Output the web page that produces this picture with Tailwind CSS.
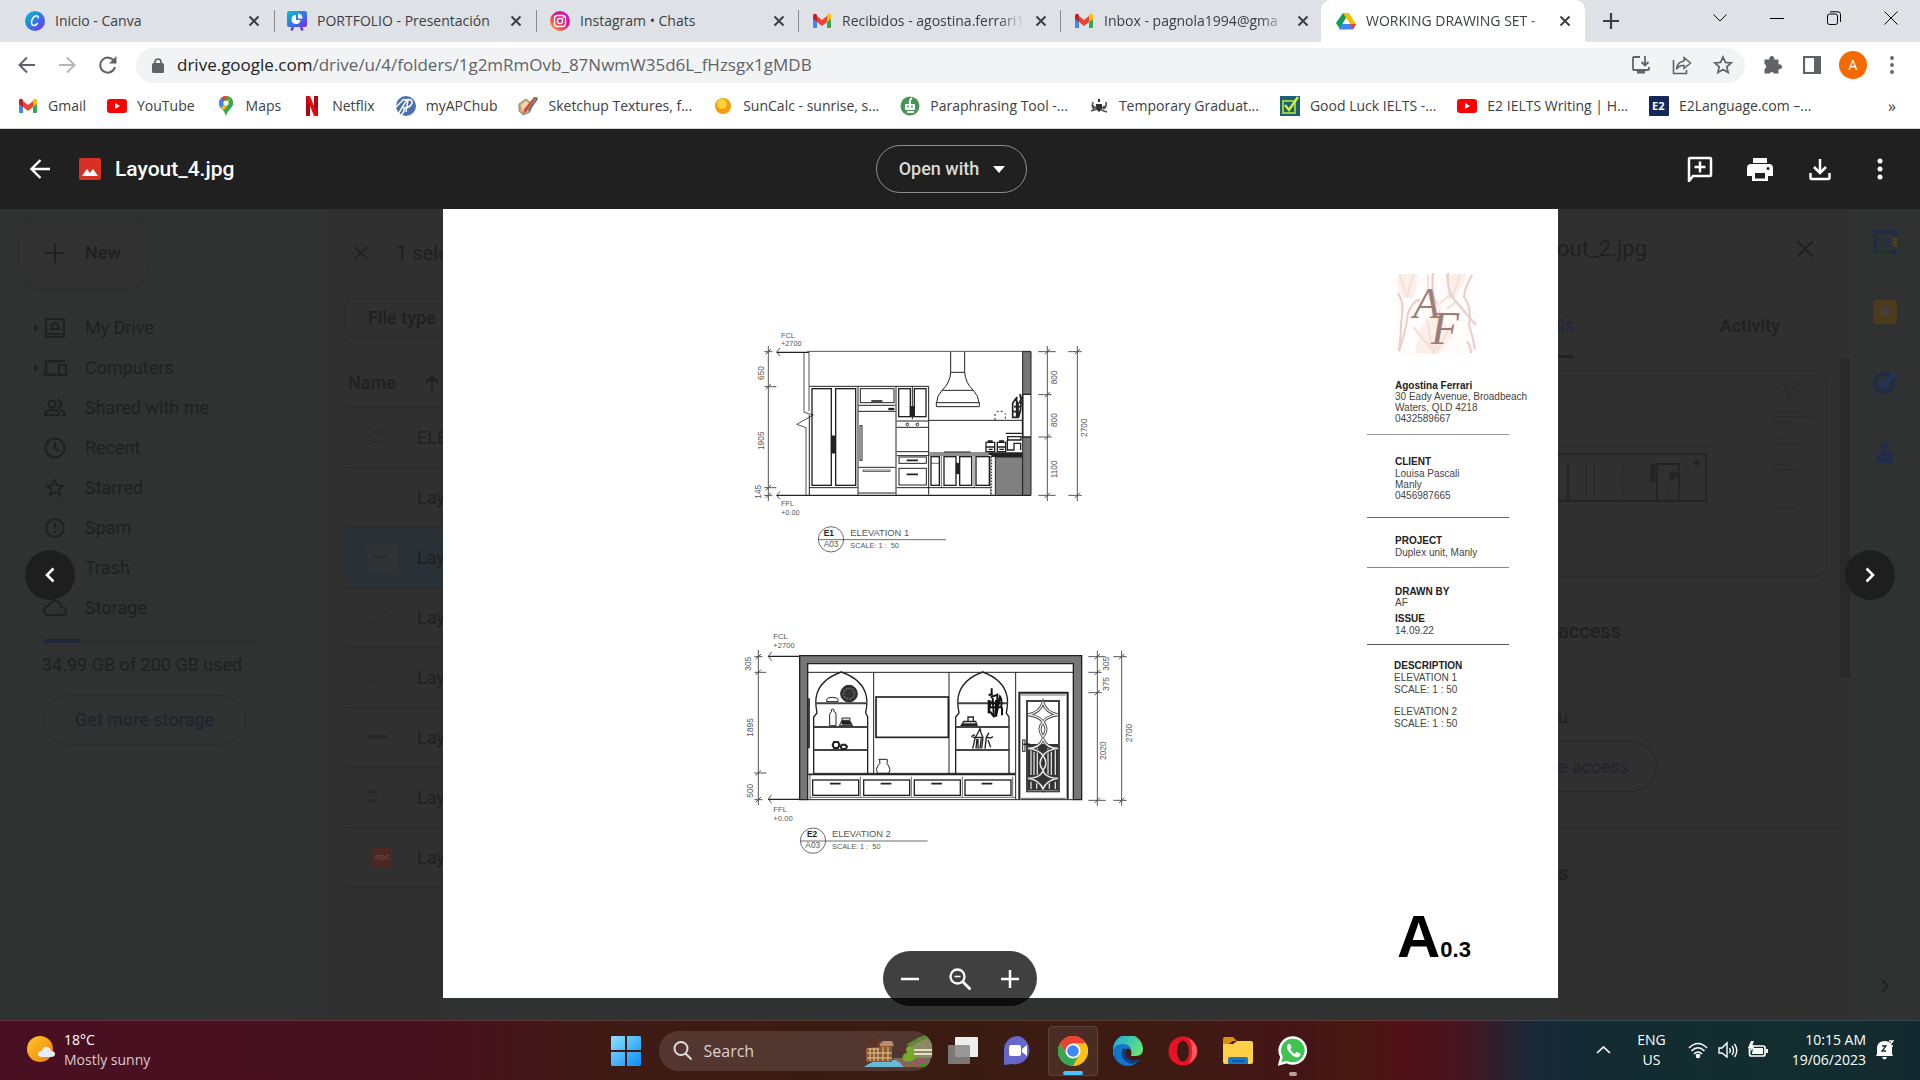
<!DOCTYPE html>
<html lang="en">
	<head>
		<meta charset="UTF-8" />
		<meta name="viewport" content="width=device-width, initial-scale=1.0" />
		<title>WORKING DRAWING SET</title>
		<script src="https://cdn.jsdelivr.net/npm/@tailwindcss/browser@4"></script>
	</head>
	<body class="flex h-screen flex-col overflow-hidden bg-[#303231] font-['Open_Sans',sans-serif] text-sm text-[#3c4043]">
		<!-- Shared icons -->
		<svg class="hidden">
			<symbol id="x" viewBox="0 0 12 12"><path d="M1.5 1.5l9 9M10.5 1.5l-9 9" stroke="currentColor" stroke-width="2" fill="none" /></symbol>
			<symbol id="thin-x" viewBox="0 0 16 16"><path d="M1 1l14 14M15 1L1 15" stroke="currentColor" stroke-width="1.8" fill="none" /></symbol>
			<symbol id="gmail" viewBox="0 0 20 16">
				<path d="M1 2v12q0 1 1 1h3V7z" fill="#4285f4" />
				<path d="M19 2v12q0 1-1 1h-3V7z" fill="#34a853" />
				<path d="M5 3v6l5 4 5-4V3l-5 4z" fill="#ea4335" />
				<path d="M1 3q0-3 3-2l1 1v7L1 6z" fill="#c5221f" />
				<path d="M19 3q0-3-3-2l-1 1v7l4-3z" fill="#fbbc04" />
			</symbol>
			<symbol id="youtube" viewBox="0 0 20 14"><rect width="20" height="14" rx="3" fill="#f00" /><path d="M8 4l5 3-5 3z" fill="#fff" /></symbol>
		</svg>

		<!-- Tab strip -->
		<nav class="flex h-[42px] shrink-0 bg-[#dee1e6] pl-3" aria-label="Tabs">
			<div class="flex w-[262px] items-center pl-[13px]">
				<svg class="h-5 w-5 shrink-0" viewBox="0 0 20 20">
					<defs><linearGradient id="canva" x1="0" y1="0" x2="1" y2="1"><stop stop-color="#00c4cc" /><stop offset=".5" stop-color="#2f7be8" /><stop offset="1" stop-color="#7d2ae8" /></linearGradient></defs>
					<circle cx="10" cy="10" r="10" fill="url(#canva)" />
					<path d="M13 7.5c.8-2-.8-3.5-2.7-2.5C7.5 6.3 6 10 6.700 12.8c.7 2.500 4 2.400 6-.8" stroke="#fff" stroke-width="1.5" fill="none" />
				</svg>
				<span class="ml-[10px] w-[193px] overflow-hidden whitespace-nowrap">Inicio - Canva</span>
				<button aria-label="Close tab"><svg class="h-3 w-3"><use href="#x" /></svg></button>
			</div>
			<div class="my-[10px] w-px bg-[#868b90]"></div>
			<div class="flex w-[261px] items-center pl-3">
				<svg class="h-5 w-5 shrink-0" viewBox="0 0 20 20">
					<rect width="20" height="16" rx="2" fill="url(#canva)" />
					<path d="M6 16l-1.500 3.500M14 16l1.500 3.500" stroke="#6b35e0" stroke-width="2.5" />
					<path d="M9 4a4.500 4.500 0 1 0 4.500 5H9z" fill="#fff" /><path d="M11 2.500v5h4.500a5 5 0 0 0-4.500-5z" fill="#fff" />
				</svg>
				<span class="ml-[10px] w-[193px] overflow-hidden whitespace-nowrap">PORTFOLIO - Presentación</span>
				<button aria-label="Close tab"><svg class="h-3 w-3"><use href="#x" /></svg></button>
			</div>
			<div class="my-[10px] w-px bg-[#868b90]"></div>
			<div class="flex w-[261px] items-center pl-[13px]">
				<svg class="h-5 w-5 shrink-0" viewBox="0 0 20 20">
					<defs><linearGradient id="insta" x1="0" y1="1" x2="1" y2="0"><stop stop-color="#fd5" /><stop offset=".3" stop-color="#ff543e" /><stop offset=".6" stop-color="#e1118e" /><stop offset="1" stop-color="#b42de0" /></linearGradient></defs>
					<circle cx="10" cy="10" r="10" fill="url(#insta)" />
					<rect x="4.5" y="4.5" width="11" height="11" rx="3" fill="none" stroke="#fff" stroke-width="1.4" />
					<circle cx="10" cy="10" r="2.6" fill="none" stroke="#fff" stroke-width="1.4" /><circle cx="13.2" cy="6.8" r=".8" fill="#fff" />
				</svg>
				<span class="ml-[10px] w-[193px] overflow-hidden whitespace-nowrap">Instagram • Chats</span>
				<button aria-label="Close tab"><svg class="h-3 w-3"><use href="#x" /></svg></button>
			</div>
			<div class="my-[10px] w-px bg-[#868b90]"></div>
			<div class="flex w-[261px] items-center pl-[13px]">
				<svg class="h-4 w-5 shrink-0"><use href="#gmail" /></svg>
				<span class="ml-[10px] mr-[10px] w-[183px] overflow-hidden whitespace-nowrap mask-r-from-85% mask-r-to-100%">Recibidos - agostina.ferrari1</span>
				<button aria-label="Close tab"><svg class="h-3 w-3"><use href="#x" /></svg></button>
			</div>
			<div class="my-[10px] w-px bg-[#868b90]"></div>
			<div class="flex w-[260px] items-center pl-[13px]">
				<svg class="h-4 w-5 shrink-0"><use href="#gmail" /></svg>
				<span class="ml-[10px] mr-[10px] w-[183px] overflow-hidden whitespace-nowrap mask-r-from-85% mask-r-to-100%">Inbox - pagnola1994@gma</span>
				<button aria-label="Close tab"><svg class="h-3 w-3"><use href="#x" /></svg></button>
			</div>
			<div class="flex w-[264px] items-center rounded-t-[10px] bg-white pl-[15px]">
				<svg class="h-5 w-5 shrink-0" viewBox="0 0 20 18">
					<path d="M7 1h6L7 11l-3 6-4-6z" fill="#0f9d58" /><path d="M7 1h6l7 11h-6z" fill="#fbbc04" /><path d="M6 12h14l-3 5.500H3z" fill="#4285f4" /><path d="M14 12h6l-3 5.500z" fill="#ea4335" /><path d="M10 6l3.500 6h-7z" fill="#fff" />
				</svg>
				<span class="ml-[10px] mr-[10px] w-[183px] overflow-hidden whitespace-nowrap mask-r-from-90% mask-r-to-100%">WORKING DRAWING SET -</span>
				<button aria-label="Close tab"><svg class="h-3 w-3"><use href="#x" /></svg></button>
			</div>
			<button class="ml-[18px]" aria-label="New tab"><svg class="h-4 w-4" viewBox="0 0 16 16"><path d="M8 0v16M0 8h16" stroke="#3c4043" stroke-width="2.2" /></svg></button>
			<div class="ml-auto flex h-9 pr-px text-black">
				<button class="flex w-[57px] items-center justify-center" aria-label="Search tabs"><svg class="h-2 w-[14px]" viewBox="0 0 14 8"><path d="M.5.5L7 7 13.500.5" fill="none" stroke="currentColor" /></svg></button>
				<button class="flex w-[57px] items-center justify-center" aria-label="Minimize"><svg class="h-2 w-[14px]" viewBox="0 0 14 8"><path d="M0 4.500h14" stroke="currentColor" /></svg></button>
				<button class="flex w-[57px] items-center justify-center" aria-label="Restore"><svg class="h-[14px] w-[14px]" viewBox="0 0 14 14"><rect x=".5" y="3" width="10" height="10.5" rx="2" fill="none" stroke="currentColor" /><path d="M3 .8h8q2.500 0 2.500 2.500V11" fill="none" stroke="currentColor" /></svg></button>
				<button class="flex w-[57px] items-center justify-center" aria-label="Close"><svg class="h-[14px] w-[14px]" viewBox="0 0 14 14"><path d="M.5.5l13 13M13.500.5l-13 13" stroke="currentColor" /></svg></button>
			</div>
		</nav>

		<!-- Address bar -->
		<div class="flex h-[46px] shrink-0 items-center bg-white text-[#5f6368]">
			<button class="ml-[18px]" aria-label="Back"><svg class="h-[18px] w-[18px]" viewBox="0 0 18 18"><path d="M17 9H2M9 1.500L1.500 9 9 16.500" fill="none" stroke="currentColor" stroke-width="2" /></svg></button>
			<button class="ml-[22px]" aria-label="Forward"><svg class="h-[18px] w-[18px]" viewBox="0 0 18 18"><path d="M1 9h15M9 1.500L16.500 9 9 16.500" fill="none" stroke="#b5b8bb" stroke-width="2" /></svg></button>
			<button class="ml-[23px]" aria-label="Reload"><svg class="h-[18px] w-[18px]" viewBox="0 0 18 18"><path d="M15 5A7.500 7.500 0 1 0 16 11" fill="none" stroke="currentColor" stroke-width="2" /><path d="M17.500 0v7.500H10z" fill="currentColor" /></svg></button>
			<div class="ml-[19px] flex h-[35px] flex-1 items-center rounded-full bg-[#f1f3f4] pl-4">
				<svg class="h-[15px] w-3" viewBox="0 0 12 15"><rect y="5" width="12" height="10" rx="1.5" fill="currentColor" /><path d="M3 6V4a3 3 0 0 1 6 0v2" fill="none" stroke="currentColor" stroke-width="1.7" /></svg>
				<a href="#" class="ml-[13px] text-[17px]"><span class="text-[#202124]">drive.google.com</span>/drive/u/4/folders/1g2mRmOvb_87NwmW35d6L_fHzsgx1gMDB</a>
				<div class="ml-auto flex gap-[21px] pr-3">
					<button aria-label="Install"><svg class="h-5 w-5" viewBox="0 0 20 20"><path d="M9 2H3q-1 0-1 1v11q0 1 1 1h14q1 0 1-1v-2" fill="none" stroke="currentColor" stroke-width="1.8" /><path d="M14 1v9M10.500 7l3.500 3.500L17.500 7" fill="none" stroke="currentColor" stroke-width="1.8" /><path d="M6 16h8v2.500H6z" fill="currentColor" /></svg></button>
					<button aria-label="Share"><svg class="h-5 w-5" viewBox="0 0 20 20"><path d="M1.500 5v13.500h13V15" fill="none" stroke="currentColor" stroke-width="1.6" /><path d="M12 2.500L18.500 8 12 13.500V10.500q-5-.5-7.500 4 .5-7.500 7.500-8.500z" fill="none" stroke="currentColor" stroke-width="1.5" /></svg></button>
					<button aria-label="Bookmark"><svg class="h-5 w-5" viewBox="0 0 20 20"><path d="M10 2l2.400 5.400 5.800.6-4.400 3.800 1.300 5.700L10 14.500l-5.100 3 1.300-5.700L1.800 8l5.800-.6z" fill="none" stroke="currentColor" stroke-width="1.7" /></svg></button>
				</div>
			</div>
			<div class="flex items-center pl-[18px] pr-[26px]">
				<button aria-label="Extensions"><svg class="h-5 w-5" viewBox="0 0 20 20"><path d="M1.500 4.500h5a2.500 2.500 0 1 1 4.600 0h4.400v5a2.500 2.500 0 1 1 0 4.500v4.500h-4.400a2.500 2.500 0 0 0-4.600 0h-5V14a2.500 2.500 0 0 0 0-4.800z" fill="currentColor" /></svg></button>
				<button class="ml-5" aria-label="Side panel"><svg class="h-[18px] w-[18px]" viewBox="0 0 18 18"><rect x="1" y="1" width="16" height="16" fill="none" stroke="currentColor" stroke-width="2.2" /><path d="M11 1h6v16h-6z" fill="currentColor" /></svg></button>
				<button class="ml-[18px] h-7 w-7 rounded-full bg-[#f56a00] text-sm text-white">A</button>
				<button class="ml-[23px]" aria-label="Menu"><svg class="h-[18px] w-1" viewBox="0 0 4 18"><g fill="currentColor"><circle cx="2" cy="2" r="1.9" /><circle cx="2" cy="9" r="1.9" /><circle cx="2" cy="16" r="1.9" /></g></svg></button>
			</div>
		</div>

		<!-- Bookmarks -->
		<nav class="flex h-[41px] shrink-0 items-center gap-[21px] border-b border-[#d5d7da] bg-white pb-[5px] pl-[18px] pr-6 whitespace-nowrap" aria-label="Bookmarks">
			<a href="#" class="flex items-center gap-[10px]"><svg class="h-4 w-5"><use href="#gmail" /></svg>Gmail</a>
			<a href="#" class="flex items-center gap-[10px]"><svg class="h-[14px] w-5"><use href="#youtube" /></svg>YouTube</a>
			<a href="#" class="flex items-center gap-[10px]"><svg class="h-5 w-5" viewBox="0 0 20 20"><path d="M10 0a7 7 0 0 0-7 7c0 5 5 6 7 13 2-7 7-8 7-13a7 7 0 0 0-7-7z" fill="#34a853" /><path d="M3 7a7 7 0 0 1 2-5l5 5-5 6q-2-3-2-6z" fill="#4285f4" /><path d="M5 2a7 7 0 0 1 7-1.700L7.500 5z" fill="#ea4335" /><path d="M12 .3Q17 2 17 7q0 3-3 6l-4-2z" fill="#34a853" /><path d="M5 12l9-10q-3 9-6 12-2 0-3-2z" fill="#fbbc04" /><circle cx="10" cy="7" r="2.6" fill="#fff" /></svg>Maps</a>
			<a href="#" class="flex items-center gap-[10px]"><svg class="h-5 w-5" viewBox="0 0 20 20"><path d="M4 0h4v20H4zM12 0h4v20h-4z" fill="#b1060f" /><path d="M4 0h4l8 20h-4z" fill="#e50914" /></svg>Netflix</a>
			<a href="#" class="flex items-center gap-[10px]"><svg class="h-5 w-5" viewBox="0 0 20 20"><circle cx="10" cy="10" r="10" fill="#4a6fb3" /><path d="M2 18C6 13 8 6 12 4l-2 12M8 4q9-2 8 3-1 4-7 5M0 11q6-6 8-8M5 19q4-3 3-8" fill="none" stroke="#fff" stroke-width="1.5" /></svg>myAPChub</a>
			<a href="#" class="flex items-center gap-[10px]"><svg class="h-5 w-5" viewBox="0 0 20 20"><path d="M1 8l7-5 6 5-2 8-7 3-4-4z" fill="#d9a56c" stroke="#7d8da0" /><path d="M3 9l5-4 4 4-2 6-5 1z" fill="#f0d9b8" /><path d="M19 1L9 15l-4 3 1-5L16 1z" fill="#c8553e" /><path d="M19 1l-9 13 1 2L20 3z" fill="#6a6f78" /></svg>Sketchup Textures, f...</a>
			<a href="#" class="flex items-center gap-[10px]"><svg class="h-5 w-5" viewBox="0 0 20 20"><circle cx="10" cy="10" r="8" fill="#f59b0c" /><circle cx="9" cy="8" r="5" fill="#ffd23c" /></svg>SunCalc - sunrise, s...</a>
			<a href="#" class="flex items-center gap-[10px]"><svg class="h-5 w-5" viewBox="0 0 20 20"><circle cx="10" cy="10" r="9.5" fill="#499557" /><rect x="5" y="8" width="10" height="6" rx="1" fill="#fff" /><path d="M7 16h7M10 8q-1-4 2-6" stroke="#fff" stroke-width="2" fill="none" /><circle cx="8" cy="10.5" r="1" fill="#499557" /><circle cx="12" cy="10.5" r="1" fill="#499557" /></svg>Paraphrasing Tool -...</a>
			<a href="#" class="flex items-center gap-[10px]"><svg class="h-5 w-5" viewBox="0 0 20 20"><path d="M7 8h6v5l-3 3-3-3zM9 3h2v3H9z" fill="#333" /><path d="M6 14q-4-2-2-8M14 13q4-1 3-7M2 15l6-2M18 16l-6-2M4 10l3 2M16 10l-3 2" stroke="#555" stroke-width="1.7" fill="none" /></svg>Temporary Graduat...</a>
			<a href="#" class="flex items-center gap-[10px]"><svg class="h-5 w-5" viewBox="0 0 20 20"><rect width="20" height="20" fill="#1f5f74" /><rect x="3" y="5" width="12" height="12" fill="none" stroke="#8ed13f" stroke-width="2" /><path d="M5 9l4 5L18 1" fill="none" stroke="#d7ec3b" stroke-width="2.5" /></svg>Good Luck IELTS -...</a>
			<a href="#" class="flex items-center gap-[10px]"><svg class="h-[14px] w-5"><use href="#youtube" /></svg>E2 IELTS Writing | H...</a>
			<a href="#" class="flex items-center gap-[10px]"><svg class="h-5 w-5" viewBox="0 0 20 20"><rect width="20" height="20" rx="1" fill="#14285a" /><text x="3" y="14" font-size="11" font-weight="700" fill="#fff">E2</text></svg>E2Language.com –...</a>
			<button class="ml-auto text-base" aria-label="More bookmarks">»</button>
		</nav>

		<!-- Viewer header -->
		<header class="grid h-20 shrink-0 grid-cols-3 items-center bg-[#202020] pr-4 font-[Roboto,sans-serif] text-white">
			<div class="flex items-center pl-[30px]">
				<button aria-label="Back"><svg class="h-5 w-5" viewBox="0 0 20 20"><path d="M20 10H2M10.500 1L1.500 10l9 9" fill="none" stroke="currentColor" stroke-width="2.4" /></svg></button>
				<svg class="ml-[29px] h-[22px] w-[22px]" viewBox="0 0 22 22"><rect width="22" height="22" rx="2" fill="#d93025" /><path d="M3 18l5-7 3 4 3-4 5 7z" fill="#fff" /></svg>
				<h1 class="ml-[14px] text-[21px] font-medium">Layout_4.jpg</h1>
			</div>
			<button class="flex h-12 w-[151px] items-center justify-center gap-[14px] justify-self-center rounded-full border border-[#8e8e8e] text-lg font-medium text-[#dadada]">
				Open with
				<svg class="h-[7px] w-3" viewBox="0 0 12 7"><path d="M0 0h12L6 7z" fill="#fff" /></svg>
			</button>
			<div class="flex items-center gap-[34px] justify-self-end pr-[11px]">
				<button aria-label="Add comment"><svg class="h-[26px] w-[26px]" viewBox="0 0 26 26"><path d="M2 25V3q0-1 1-1h20q1 0 1 1v16q0 1-1 1H6z" fill="none" stroke="currentColor" stroke-width="2.5" /><path d="M13 5.500v11M7.500 11h11" stroke="currentColor" stroke-width="2.5" /></svg></button>
				<button aria-label="Print"><svg class="h-[26px] w-[26px]" viewBox="0 0 26 26"><path d="M6 2h14v5H6zM4 8h18q4 0 4 4v8h-5v5H5v-5H0v-8q0-4 4-4z" fill="currentColor" /><path d="M8 17h10v5.500H8z" fill="#202020" /><circle cx="21" cy="12.5" r="1.5" fill="#202020" /></svg></button>
				<button aria-label="Download"><svg class="h-[26px] w-[26px]" viewBox="0 0 26 26"><path d="M13 3v13M7 11l6 6 6-6M3.500 17v5q0 1 1 1h17q1 0 1-1v-5" fill="none" stroke="currentColor" stroke-width="2.5" /></svg></button>
				<button aria-label="More actions"><svg class="h-[26px] w-[26px]" viewBox="0 0 26 26"><g fill="currentColor"><circle cx="13" cy="5" r="2.5" /><circle cx="13" cy="13" r="2.5" /><circle cx="13" cy="21" r="2.5" /></g></svg></button>
			</div>
		</header>

		<!-- Viewer stage -->
		<main class="relative flex min-h-0 flex-1 font-[Roboto,sans-serif] text-lg text-[#1f2020]">
			<!-- Dimmed sidebar -->
			<aside class="w-[325px] shrink-0 bg-[#303231]">
				<button class="mt-2 ml-5 flex h-[71px] w-[127px] items-center rounded-[20px] bg-[#313131] pl-[25px] shadow-sm">
					<svg class="h-5 w-5" viewBox="0 0 20 20"><path d="M10 0v20M0 10h20" stroke="currentColor" stroke-width="2" /></svg>
					<span class="ml-5 font-medium">New</span>
				</button>
				<nav class="mt-5 flex flex-col">
					<a href="#" class="flex h-10 items-center pl-[33px]"><svg class="h-2 w-[10px]" viewBox="0 0 10 8"><path d="M1 0l4 4-4 4z" fill="currentColor" /></svg><svg class="mr-[18px] h-6 w-6" viewBox="0 0 24 24" fill="none" stroke="currentColor" stroke-width="2"><rect x="3" y="3" width="18" height="18" /><path d="M3 18h18" /><path d="M12 7q-3 0-4 6h8q-1-6-4-6z" /></svg>My Drive</a>
					<a href="#" class="flex h-10 items-center pl-[33px]"><svg class="h-2 w-[10px]" viewBox="0 0 10 8"><path d="M1 0l4 4-4 4z" fill="currentColor" /></svg><svg class="mr-[18px] h-6 w-6" viewBox="0 0 24 24" fill="none" stroke="currentColor" stroke-width="2"><path d="M22 5H3v14M0 19h14" stroke-width="2.5" /><rect x="16" y="9" width="7" height="10" /></svg>Computers</a>
					<a href="#" class="flex h-10 items-center pl-[43px]"><svg class="mr-[18px] h-6 w-6" viewBox="0 0 24 24" fill="none" stroke="currentColor" stroke-width="2"><circle cx="9" cy="8" r="3.5" /><path d="M2 19v-2q2-3 7-3t7 3v2zM14 4q4 0 4 4t-4 4M17 14q5 1 5 5h-3" /></svg>Shared with me</a>
					<a href="#" class="flex h-10 items-center pl-[43px]"><svg class="mr-[18px] h-6 w-6" viewBox="0 0 24 24" fill="none" stroke="currentColor" stroke-width="2"><circle cx="12" cy="12" r="9.5" /><path d="M12 6v6l4 3" /></svg>Recent</a>
					<a href="#" class="flex h-10 items-center pl-[43px]"><svg class="mr-[18px] h-6 w-6" viewBox="0 0 24 24" fill="none" stroke="currentColor" stroke-width="1.8"><path d="M12 4l2.300 5.300 5.700.5-4.300 3.800 1.300 5.600-5-3-5 3 1.300-5.600L4 9.800l5.700-.5z" /></svg>Starred</a>
					<a href="#" class="flex h-10 items-center pl-[43px]"><svg class="mr-[18px] h-6 w-6" viewBox="0 0 24 24" fill="none" stroke="currentColor" stroke-width="2"><path d="M8.500 3.500h7l5 5v7l-5 5h-7l-5-5v-7zM12 7v6M12 15v2" /></svg>Spam</a>
					<a href="#" class="flex h-10 items-center pl-[85px]">Trash</a>
					<a href="#" class="flex h-10 items-center pl-[43px]"><svg class="mr-[18px] h-6 w-6" viewBox="0 0 24 24" fill="none" stroke="currentColor" stroke-width="2"><path d="M6 19q-5 0-5-4.500t5-5Q8 5 12 5q5 0 6 6 5 0 5 4t-4 4z" /></svg>Storage</a>
				</nav>
				<div class="mt-[11px] ml-[43px] h-1 w-[216px] rounded-full bg-[#2d2f2e]"><div class="h-1 w-[37px] rounded-full bg-[#1f2738]"></div></div>
				<p class="mt-2 ml-[42px]">34.99 GB of 200 GB used</p>
				<button class="mt-4 ml-[43px] h-[50px] w-[203px] rounded-full border border-[#292b2a] font-medium text-[#20242e]">Get more storage</button>
			</aside>

			<!-- Dimmed file list -->
			<section class="w-[118px] shrink-0 overflow-hidden bg-[#303030] pl-5 whitespace-nowrap">
				<div class="flex h-[89px] items-center pb-[2px] text-xl"><svg class="ml-[9px] mr-7 h-[14px] w-[14px] shrink-0"><use href="#thin-x" /></svg>1 sele</div>
				<button class="h-10 w-[130px] rounded-lg border border-[#282828] pl-[22px] text-left font-medium">File type</button>
				<div class="flex h-[70px] items-center border-b border-[#292929] pt-5 pl-[3px] font-medium">Name<svg class="ml-7 h-4 w-4" viewBox="0 0 16 16"><path d="M8 16V2M2 8l6-6 6 6" fill="none" stroke="currentColor" stroke-width="2" /></svg></div>
				<div class="flex h-[60px] items-center border-b border-[#292929] pl-[22px]"><svg class="mr-5 h-[30px] w-[30px] shrink-0" viewBox="0 0 30 30" stroke="#282828" stroke-width="2"><path d="M4 9h11M4 19h9" /></svg>ELE</div>
				<div class="flex h-[60px] items-center border-b border-[#292929] pl-[72px]">Lay</div>
				<div class="flex h-[60px] items-center border-b border-[#292929] bg-[#293036] pl-[22px]"><svg class="mr-5 h-[30px] w-[30px] shrink-0" viewBox="0 0 30 30"><rect width="30" height="30" rx="2" fill="#303234" /><path d="M4 14h17" stroke="#2a2c2e" stroke-width="3" /></svg>Lay</div>
				<div class="flex h-[60px] items-center border-b border-[#292929] pl-[22px]"><svg class="mr-5 h-[30px] w-[30px] shrink-0" viewBox="0 0 30 30" stroke="#2b2b2b"><path d="M0 9h20M0 20h16M28 4v20" /></svg>Lay</div>
				<div class="flex h-[60px] items-center border-b border-[#292929] pl-[22px]"><svg class="mr-5 h-[30px] w-[30px] shrink-0" viewBox="0 0 30 30" stroke="#2a2a2a" stroke-width="2"><path d="M3 9h8M2 18h2M6 19h7" /></svg>Lay</div>
				<div class="flex h-[60px] items-center border-b border-[#292929] pl-[22px]"><svg class="mr-5 h-[30px] w-[30px] shrink-0" viewBox="0 0 30 30"><path d="M0 14h20" stroke="#272727" stroke-width="4" /></svg>Lay</div>
				<div class="flex h-[60px] items-center border-b border-[#292929] pl-[22px]"><svg class="mr-5 h-[30px] w-[30px] shrink-0" viewBox="0 0 30 30" stroke="#282828" stroke-width="3"><path d="M0 9h10M2 18h8" /></svg>Lay</div>
				<div class="flex h-[60px] items-center border-b border-[#292929] pl-[27px]"><span class="mr-[25px] h-5 w-5 shrink-0 rounded-xs bg-[#4b2725] text-center text-[8px] leading-5 font-bold text-[#6a4543]">PDF</span>Lay</div>
			</section>

			<!-- Drawing sheet -->
			<article class="mb-[22px] flex min-w-0 flex-1 bg-white font-['Liberation_Sans',sans-serif] text-[#222]">
				<div class="flex flex-1 flex-col gap-[60px] pt-[111px] pl-[287px]">
					<!-- Kitchen elevation -->
					<svg class="h-[240px] w-[380px]" viewBox="0 0 1140 720" fill="none" stroke="#222" stroke-width="3">
						<g stroke="#555">
							<path d="M115 78v465M952 78v465M1042 78v465" />
							<path d="M103 95h24M103 200h36M103 503h36M103 526h24M925 95h52M925 224h40M925 351h40M925 526h52M1015 95h40M1015 526h40" />
							<path d="M107 103l16-16M107 208l16-16M107 511l16-16M107 534l16-16M944 103l16-16M944 232l16-16M944 359l16-16M944 534l16-16M1034 103l16-16M1034 534l16-16" />
							<path d="M150 84l-10 12 10 12M150 514l-10 12 10 12" />
							<path d="M232 94h670M222 97v180l28 8-50 28 28 10v203M237 97v177" />
						</g>
						<path d="M140 97h97M140 526h763" stroke-width="4" />
						<!-- Tall units and fridge -->
						<path d="M238 285v241M238 199h358v105M238 503h145M384 199v327M498 199v327" />
						<g stroke-width="4"><rect x="246" y="206" width="58" height="290" /><rect x="317" y="206" width="60" height="290" /></g>
						<path d="M304 348h12v51h-12z" fill="#222" />
						<rect x="391" y="206" width="101" height="42" /><path d="M424 243h33" stroke-width="5" />
						<path d="M385 256h111M385 274h111M385 442h111M385 519h111" /><path d="M475 267h18" stroke-width="7" /><rect x="390" y="317" width="6" height="104" /><rect x="399" y="450" width="81" height="4" stroke-width="2" />
						<!-- Oven column -->
						<g stroke-width="4"><rect x="506" y="206" width="35" height="84" /><rect x="553" y="206" width="35" height="84" /></g>
						<path d="M541 260h12v30h-12z" fill="#222" />
						<path d="M547 200v98M500 303h96M500 322h96M500 395h96M596 304v220M500 407h96M500 503h282" /><circle cx="532" cy="313" r="4" /><circle cx="562" cy="313" r="4" />
						<rect x="507" y="411" width="82" height="19" /><rect x="507" y="445" width="82" height="50" /><path d="M530 421h34M530 463h34" stroke-width="5" />
						<!-- Range hood -->
						<path d="M662 95v62h42V95M662 157q-2 32-26 54-16 17-16 37M704 157q2 32 26 54 16 17 17 37M636 211h94M619 248h129v12H619z" />
						<!-- Shelf and bench -->
						<path d="M596 301h280M598 399h178M598 405h178M642 396h80" /><path d="M795 300v-20M800 274h18M826 296v-16" stroke-dasharray="6 6" />
						<g stroke-width="4"><rect x="603" y="410" width="25" height="86" /><rect x="642" y="410" width="36" height="86" /><rect x="689" y="410" width="36" height="86" /><rect x="738" y="410" width="40" height="86" /></g>
						<path d="M603 430h25M634 407v96M732 407v96M782 407v118" stroke-width="2" /><path d="M679 430h9v31h-9z" fill="#222" />
						<path d="M768 367h26v28h-26zM802 367h25v28h-25zM773 363h15M807 363h15" stroke-width="4" /><path d="M768 381h26M802 381h25M776 388h12M808 388h14" stroke-width="4" />
						<path d="M827 340h48M833 350h40v10h-40zM832 360v30h20v-20h20v20" stroke-width="4" />
						<path d="M848 292v-42l8-12 8 12v42zM866 292q12-35 4-70M852 260h18M850 275h22M860 230v60M868 250l8-20" stroke-width="5" />
						<path d="M776 401h100M784 407h94" stroke-width="8" /><path d="M785 410v115" stroke-dasharray="4 5" />
						<path d="M796 411h82v115h-82z" fill="#808080" /><path d="M878 95h25v128h-25zM878 351h25v175h-25z" fill="#777" /><path d="M878 223h25v128h-25z" /><path d="M878 223v128" stroke-width="5" />
						<!-- Labels -->
						<g fill="#555" stroke="none" font-size="22">
							<text x="153" y="54">FCL</text><text x="153" y="77">+2700</text><text x="153" y="559">FFL</text><text x="153" y="584">+0.00</text>
							<text transform="rotate(-90 101 180)" x="101" y="180" font-size="25">650</text>
							<text transform="rotate(-90 101 390)" x="101" y="390" font-size="25">1905</text>
							<text transform="rotate(-90 94 536)" x="94" y="536" font-size="25">145</text>
							<text transform="rotate(-90 980 193)" x="980" y="193" font-size="25">800</text>
							<text transform="rotate(-90 980 321)" x="980" y="321" font-size="25">800</text>
							<text transform="rotate(-90 980 475)" x="980" y="475" font-size="25">1100</text>
							<text transform="rotate(-90 1072 351)" x="1072" y="351" font-size="25">2700</text>
							<text x="361" y="647" font-size="28">ELEVATION 1</text><text x="361" y="683" font-size="22">SCALE: 1 :&#160; 50</text>
							<text x="281" y="647" font-size="25" font-weight="700" fill="#222">E1</text><text x="281" y="681" font-size="25">A03</text>
						</g>
						<circle cx="303" cy="658" r="38" stroke-width="2" /><path d="M265 659h383" stroke-width="2" />
					</svg>
					<!-- Living room elevation -->
					<svg class="h-[240px] w-[420px]" viewBox="0 0 1260 720" fill="none" stroke="#222" stroke-width="3">
						<g stroke="#555">
							<path d="M85 90v465M1102 92v465M1175 92v465" />
							<path d="M73 110h24M73 157h36M73 459h36M73 539h24M1075 110h52M1075 157h40M1075 218h40M1075 541h52M1150 110h40M1150 541h40" />
							<path d="M77 118l16-16M77 165l16-16M77 467l16-16M77 547l16-16M1094 118l16-16M1094 165l16-16M1094 226l16-16M1094 549l16-16M1167 118l16-16M1167 549l16-16" />
							<path d="M125 96l-10 13 10 13M125 524l-10 13 10 13" />
						</g>
						<path d="M115 109h95M115 538h95" stroke-width="4" />
						<path d="M209 107h846v432h-25V131H233v408h-24z" fill="#777" stroke-width="4" />
						<path d="M233 157h797M431 157v303M657 157v303M857 157v380M250 460h607M233 539h797" />
						<path d="M237 235v150" stroke-width="5" />
						<rect x="438" y="231" width="217" height="121" stroke-width="5" />
						<!-- Arched niches -->
						<path d="M251 460V291l10-12q-6-30-2-50 10-50 75-73 65 23 75 73 4 20-2 50l6 12v169M677 460V291l10-12q-6-30-2-50 10-50 73-73 63 23 73 73 4 20-2 50l8 12v169" stroke-width="4" />
						<path d="M258 250h150M251 321h161M251 390h161M683 250h150M677 321h161M677 390h161" stroke="#444" stroke-width="6" />
						<circle cx="357" cy="221" r="25" fill="#333" /><circle cx="357" cy="221" r="16" stroke="#999" stroke-width="3" stroke-dasharray="5 4" />
						<path d="M290 245v-7q3-6 17-6t17 6v7zM299 317v-34q2-8 6-8-3-8 3-8t4 8q5 0 6 8v34zM328 317h40l-10-16h-22zM336 301v-7h24v7" /><path d="M333 305h28M335 311h30M312 366h12l4 8-4 10h-12l-4-9zM336 374h10l5 6-4 7h-12l-3-7z" stroke-width="6" />
						<path d="M694 316h47l-4-12h-36zM700 305h38M714 303v-12h16v12" stroke-width="4" /><path d="M696 313h44" stroke-width="6" />
						<path d="M785 205v22M776 226l12-6M782 232l20-8v46l8-40q6 8 4 30M776 240v40l6-38M788 234l4 58M798 240v50l6-30M776 262h40M780 250h30M790 288l-10-14M816 262v24" stroke="#111" stroke-width="6" />
						<path d="M728 386l8-34 6-10 8-16 3 12 6 15-4 32M744 386v-30M765 386l4-34 8-14M769 352l12 2 8-4M774 360l8 22M728 352h28M724 350l10-6M738 386l3-30M750 386l4-34" stroke-width="4" />
						<path d="M445 418h28M449 420q4 12-6 18-8 10 0 22h33q8-12 0-22-8-6-4-18" />
						<!-- Drawers -->
						<path d="M235 463h620" stroke-width="5" /><path d="M240 465v72M240 532h615M391 470v60M544 470v60M697 470v60M848 470v60" stroke-width="2" />
						<g stroke-width="4"><rect x="248" y="480" width="138" height="46" /><rect x="401" y="480" width="138" height="46" /><rect x="553" y="480" width="138" height="46" /><rect x="705" y="480" width="138" height="46" /></g>
						<path d="M300 491h32M452 491h32M604 491h32M755 491h32" stroke-width="5" />
						<!-- Door -->
						<path d="M868 537V218h145v319" stroke-width="6" /><path d="M873 225h134M873 535h134" stroke-width="2" /><rect x="891" y="243" width="96" height="271" stroke="#444" stroke-width="6" />
						<path d="M894 372h90v138h-90z" fill="#333" stroke="none" />
						<path d="M903 385v80M912 395v70M922 385v80M954 385v80M964 395v70M976 385v80M903 485v22M976 485v22M920 490v16M958 490v16" stroke="#ddd" stroke-width="4" />
						<g stroke="#444" stroke-width="9"><path d="M894 284q35-5 45-36 10 31 45 36-35 5-45 22-10-17-45-22zM939 306q-18 22 0 44 18-22 0-44M894 385q35 0 45-28 10 28 45 28-35 5-45 22-10-17-45-22M939 407q-18 22 0 44 18-22 0-44M894 475q35 0 45-22 10 22 45 22-35 5-45 32-10-27-45-32" /></g>
						<g stroke="#eee" stroke-width="4"><path d="M894 284q35-5 45-36 10 31 45 36-35 5-45 22-10-17-45-22zM939 306q-18 22 0 44 18-22 0-44M894 385q35 0 45-28 10 28 45 28-35 5-45 22-10-17-45-22M939 407q-18 22 0 44 18-22 0-44M894 475q35 0 45-22 10 22 45 22-35 5-45 32-10-27-45-32" /></g>
						<rect x="878" y="360" width="7" height="34" /><path d="M880 373h20" stroke-width="5" />
						<!-- Labels -->
						<g fill="#555" stroke="none" font-size="23">
							<text x="130" y="57">FCL</text><text x="130" y="85">+2700</text><text x="130" y="576">FFL</text><text x="130" y="602">+0.00</text>
							<text transform="rotate(-90 64 152)" x="64" y="152" font-size="25">305</text>
							<text transform="rotate(-90 70 350)" x="70" y="350" font-size="25">1895</text>
							<text transform="rotate(-90 70 533)" x="70" y="533" font-size="25">500</text>
							<text transform="rotate(-90 1137 152)" x="1137" y="152" font-size="25">305</text>
							<text transform="rotate(-90 1137 213)" x="1137" y="213" font-size="25">375</text>
							<text transform="rotate(-90 1128 420)" x="1128" y="420" font-size="25">2020</text>
							<text transform="rotate(-90 1205 367)" x="1205" y="367" font-size="25">2700</text>
							<text x="306" y="652" font-size="28">ELEVATION 2</text><text x="306" y="686" font-size="22">SCALE: 1 :&#160; 50</text>
							<text x="231" y="652" font-size="25" font-weight="700" fill="#222">E2</text><text x="226" y="684" font-size="25">A03</text>
						</g>
						<circle cx="249" cy="662" r="38" stroke-width="2" /><path d="M211 663h382" stroke-width="2" />
					</svg>
				</div>

				<!-- Title block -->
				<div class="w-[191px] shrink-0 pt-16 text-[10px] leading-[11px] text-[#444]">
					<svg class="ml-7 h-[82px] w-[82px]" viewBox="0 0 82 82" fill="none">
						<rect width="82" height="82" rx="5" fill="#fffcfb" />
						<path d="M8 25q-8-15-4-24h18q0 16-4 24zM50 1h21q-3 14-13 25zM20 80l6-26 12-12 6-18 5 25 9 15-15 17z" fill="#fbefe9" />
						<path d="M12 24L5 2M12 24L18 2M55 26L52 2M57 26L65 2M40 80L18 54M38 80l-6-34M40 78l4-40M42 78l13-24M33 22v-20M45 30l10-8M52 36l10-8" stroke="#f5dfd7" stroke-width="2" />
						<path d="M3 20q7 10 3 30 0 12-2 28Q11 58 13 40q6-14 12-13M38 0q-2 20 4 32M53 0q-2 20 11 32 15 18 17 20M77 2q-8 14-8 22 8 10 5 28 4 12 6 24M72 68q4 6 4 12" stroke="#e8cdc8" stroke-width="2" />
						<g fill="#9c7e78" font-family="Liberation Serif" font-style="italic"><text x="18" y="45" font-size="44">A</text><text x="36" y="71" font-size="46">F</text></g>
					</svg>
					<div class="mt-[25px] h-[55px] w-[142px] border-b border-[#999] whitespace-nowrap"><div class="pl-7"><h2 class="font-bold text-[#222]">Agostina Ferrari</h2><p>30 Eady Avenue, Broadbeach</p><p>Waters, QLD 4218</p><p>0432589667</p></div></div>
					<div class="h-[83px] w-[142px] border-b border-[#666] pt-[21px] pl-7"><h2 class="mb-px font-bold text-[#222]">CLIENT</h2><p>Louisa Pascali</p><p>Manly</p><p>0456987665</p></div>
					<div class="h-[50px] w-[142px] border-b border-[#888] pt-[17px] pl-7"><h2 class="mb-px font-bold text-[#222]">PROJECT</h2><p class="whitespace-nowrap">Duplex unit, Manly</p></div>
					<div class="h-[77px] w-[142px] border-b border-[#555] pt-[18px] pl-7"><h2 class="font-bold text-[#222]">DRAWN BY</h2><p>AF</p><h2 class="mt-[5px] mb-px font-bold text-[#222]">ISSUE</h2><p>14.09.22</p></div>
					<div class="pt-[15px] pl-[27px] leading-3"><h2 class="font-bold text-[#222]">DESCRIPTION</h2><p>ELEVATION 1</p><p>SCALE: 1 : 50</p><p class="mt-[10px]">ELEVATION 2</p><p>SCALE: 1 : 50</p></div>
					<p class="mt-[177px] pl-[30px] leading-[60px] font-bold text-black"><span class="text-6xl">A</span><span class="text-[22px]">0.3</span></p>
				</div>
			</article>

			<!-- Dimmed details panel -->
			<section class="w-[292px] shrink-0 overflow-hidden bg-[#303030] whitespace-nowrap">
				<div class="flex h-20 items-center pr-9">
					<div class="flex w-[89px] justify-end text-[22px]">yout_2.jpg</div>
					<button class="ml-auto" aria-label="Close details"><svg class="h-[18px] w-[18px]"><use href="#thin-x" /></svg></button>
				</div>
				<div class="flex h-[69px] items-center justify-between pr-[70px] font-medium"><a href="#" class="flex h-full w-4 items-center justify-end border-b-3 border-[#1f2331] pt-2 text-[#23273a]">ils</a><a href="#" class="pt-[5px]">Activity</a></div>
				<div class="flex">
					<div class="flex-1">
						<div class="mt-3 mr-[13px] h-[207px] rounded-r-xl border border-l-0 border-[#292929]">
							<svg class="h-[205px] w-[266px]" viewBox="0 0 266 205" fill="none" stroke="#242424">
								<path d="M0 83h148v47H0M10 93v36M97 93h24v36M99 93v36M148 88v38" stroke-width="2" />
								<path d="M95 93v18M120 104h-6v5M140 90l-3 4" stroke-width="5" /><path d="M0 61h148M0 76h158M0 141h148M28 90v36M36 92v34M65 90v40M60 105l12 8M72 105l-12 8M110 118h12v10h-12zM130 95v25" stroke="#2a2a2a" />
								<path d="M217 41h24M217 46h40M217 51h20M217 67h15M217 73h24M217 94h16M217 99h28M217 117h14M217 137h22" stroke="#2b2b2b" stroke-width="2" /><path d="M226 10l6 18M240 9l-10 20M222 20h20" stroke="#2c2c2c" stroke-width="3" />
							</svg>
						</div>
						<h2 class="mt-10 text-xl leading-7 font-medium">access</h2>
						<p class="mt-[60px] leading-6">u</p>
						<button class="mt-3 h-[51px] w-[99px] rounded-r-full border border-l-0 border-[#262626] pr-[30px] text-right font-medium text-[#22252f]">e access</button>
						<div class="mt-9 border-t border-[#292929]"></div>
						<h2 class="mt-8 text-xl leading-6 font-medium">s</h2>
					</div>
					<div class="mt-px h-[318px] w-[10px] bg-[#292929]"></div>
				</div>
			</section>

			<!-- Dimmed app rail -->
			<aside class="flex w-[70px] shrink-0 flex-col items-center gap-[46px] bg-[#303232] pt-[21px]">
				<svg class="h-6 w-6" viewBox="0 0 24 24"><rect x="2" y="2" width="20" height="20" fill="none" stroke="#222b42" stroke-width="4" /><path d="M22 7v10" stroke="#4a3f20" stroke-width="4" /><path d="M4 22h13" stroke="#21362b" stroke-width="4" /><path d="M9 9h6v3h-5M15 12v4H9" fill="none" stroke="#26304d" stroke-width="2" /></svg>
				<svg class="h-6 w-6" viewBox="0 0 24 24"><rect width="24" height="24" rx="3" fill="#4a3b1c" /><circle cx="12" cy="11" r="5" fill="#45403a" /></svg>
				<svg class="h-6 w-6" viewBox="0 0 24 24"><circle cx="11" cy="13" r="9" fill="none" stroke="#1f2c48" stroke-width="4" /><path d="M7 12l4 4L22 3" fill="none" stroke="#23345c" stroke-width="4" /></svg>
				<svg class="h-6 w-6" viewBox="0 0 24 24" fill="#212c4b"><circle cx="12" cy="6" r="4" /><path d="M4 21v-4q0-6 8-6t8 6v4q0 2-2 2H6q-2 0-2-2z" /></svg>
				<svg class="mt-auto mb-6 h-5 w-5" viewBox="0 0 20 20"><path d="M7 4l6 6-6 6" fill="none" stroke="#202222" stroke-width="2" /></svg>
			</aside>

			<!-- Viewer controls -->
			<button class="absolute top-[341px] left-[25px] flex h-[50px] w-[50px] items-center justify-center rounded-full bg-[#1e1e1e] text-white" aria-label="Previous"><svg class="h-4 w-[10px]" viewBox="0 0 10 16"><path d="M8.500 1.500L2 8l6.500 6.500" fill="none" stroke="currentColor" stroke-width="2.6" /></svg></button>
			<button class="absolute top-[341px] right-[25px] flex h-[50px] w-[50px] items-center justify-center rounded-full bg-[#1e1e1e] text-white" aria-label="Next"><svg class="h-4 w-[10px]" viewBox="0 0 10 16"><path d="M1.500 1.500L8 8l-6.500 6.500" fill="none" stroke="currentColor" stroke-width="2.6" /></svg></button>
			<div class="absolute bottom-[14px] left-1/2 flex h-[55px] w-[154px] -translate-x-1/2 items-center justify-center gap-[30px] rounded-full bg-black/75 text-white">
				<button aria-label="Zoom out"><svg class="h-[18px] w-[18px]" viewBox="0 0 18 18"><path d="M0 9h18" stroke="currentColor" stroke-width="2.5" /></svg></button>
				<button aria-label="Reset zoom"><svg class="h-[22px] w-[22px]" viewBox="0 0 22 22" fill="none" stroke="currentColor"><circle cx="8.5" cy="8.5" r="7" stroke-width="2.3" /><path d="M13.500 13.500l8 8" stroke-width="2.8" /><path d="M5.500 8.500h6" stroke-width="1.5" /></svg></button>
				<button aria-label="Zoom in"><svg class="h-[18px] w-[18px]" viewBox="0 0 18 18"><path d="M0 9h18M9 0v18" stroke="currentColor" stroke-width="2.5" /></svg></button>
			</div>
		</main>

		<!-- Taskbar -->
		<footer class="grid h-[60px] shrink-0 grid-cols-[1fr_auto_1fr] items-center border-t border-white/15 bg-[linear-gradient(90deg,#491023_0%,#48111f_22%,#3f1a15_31%,#391c13_45%,#3d1b13_60%,#451517_68%,#461a12_70%,#501217_73%,#471521_76%,#182938_80%,#132b31_84%,#122e2f_93%,#13292f_100%)] text-white">
			<div class="flex items-center pb-[2px] pl-[27px]">
				<svg class="h-7 w-7" viewBox="0 0 28 28"><defs><linearGradient id="sun" x1="0" y1="0" x2="1" y2="1"><stop stop-color="#ffc928" /><stop offset="1" stop-color="#f07d0b" /></linearGradient></defs><circle cx="13" cy="13" r="13" fill="url(#sun)" /><path d="M15 21q-4 0-4-3t4-3q1-5 5-4 3 0 4 4 4 0 4 3t-4 3z" fill="#e3ecfb" /></svg>
				<div class="ml-[9px] leading-5"><p>18°C</p><p class="text-[#dcc9ce]">Mostly sunny</p></div>
			</div>
			<div class="flex items-center pr-[2px]">
				<button aria-label="Start"><svg class="h-[30px] w-[30px]" viewBox="0 0 30 30"><defs><linearGradient id="win" x1="0" y1="0" x2="1" y2="1"><stop stop-color="#8fe2ff" /><stop offset="1" stop-color="#0a8cf5" /></linearGradient></defs><path d="M1 0h13v14H0V1zM16 0h13l1 1v13H16zM0 16h14v14H1l-1-1zM16 16h14v13l-1 1H16z" fill="url(#win)" /></svg></button>
				<label class="ml-[18px] flex h-10 w-[274px] items-center overflow-hidden rounded-full bg-white/12 pl-[14px]">
					<svg class="h-[19px] w-[19px] shrink-0" viewBox="0 0 19 19"><circle cx="8" cy="7.5" r="6.5" fill="none" stroke="#ddd" stroke-width="2" /><path d="M12.500 12.500l6 6" stroke="#ddd" stroke-width="2" /></svg>
					<input type="text" placeholder="Search" class="ml-3 w-[158px] bg-transparent text-base outline-none placeholder:text-[#dcd3d0]" />
					<svg class="h-9 w-[71px] shrink-0" viewBox="0 0 71 36">
						<path d="M2 34q6-6 22-7h22l4 7z" fill="#69b8d6" /><path d="M30 25h38v8H44z" fill="#7a6a5c" />
						<path d="M4 29V15L12 1l5 10 3-3h10v21z" fill="#8d5a34" /><path d="M3 15L12 1l6 13z" fill="#5c3324" /><path d="M18 11l4-3h8l2 5H18z" fill="#b98d6a" />
						<path d="M6 16h11M5 20h25M5 25h25M8 15v13M12 15v13M16 15v13M21 14v14M26 14v14" stroke="#e4c79a" stroke-width="1" />
						<path d="M44 15l14-9 12-3v22H46z" fill="#8c8a63" /><path d="M52 17h18M52 21h18" stroke="#e6dec6" stroke-width="2" /><path d="M46 13l12-7 10-3" stroke="#5e8a35" stroke-width="4" fill="none" />
						<path d="M41 27q-2-6 4-7-2-6 3-7 5 2 4 8 3 5-2 7-5 2-9-1z" fill="#77ab23" /><path d="M38 30h30v4H42z" fill="#4d8a28" />
						<g fill="#e0307e"><circle cx="42" cy="31" r="1.8" /><circle cx="47" cy="33" r="1.8" /><circle cx="52" cy="30" r="1.8" /><circle cx="56" cy="33" r="1.8" /><circle cx="60" cy="28" r="1.8" /></g>
					</svg>
				</label>
				<button class="ml-[15px]" aria-label="Task view"><svg class="h-[30px] w-[30px]" viewBox="0 0 30 30"><rect x="7" y="1" width="23" height="20" rx="1" fill="#eee" /><rect y="9" width="22" height="19" rx="1" fill="#888" fill-opacity=".85" /></svg></button>
				<button class="ml-[25px]" aria-label="Chat"><svg class="h-[30px] w-[30px]" viewBox="0 0 30 30"><path d="M15 0a14 14 0 1 1-6 28L1 29V14A14 14 0 0 1 15 0z" fill="#6667cc" /><rect x="6" y="9" width="12" height="11" rx="2" fill="#fff" /><path d="M19 13l5-4v11l-5-4z" fill="#fff" /></svg></button>
				<button class="relative ml-[15px] flex h-[50px] w-[50px] items-center justify-center rounded border border-white/10 bg-white/8" aria-label="Chrome">
					<svg class="h-[30px] w-[30px]" viewBox="0 0 30 30"><circle cx="15" cy="15" r="15" fill="#fbc116" /><path d="M2 7.500a15 15 0 0 1 26 0H15l-6.500 11z" fill="#ea4335" /><path d="M2 7.500A15 15 0 0 0 15 30l6.500-11.200-13 0z" fill="#34a853" /><path d="M28 7.500A15 15 0 0 1 15 30l6.500-11.200L15 7.500z" fill="#fbc116" /><circle cx="15" cy="15" r="7.5" fill="#fff" /><circle cx="15" cy="15" r="5.8" fill="#4285f4" /></svg>
					<span class="absolute bottom-0 h-1 w-5 rounded-full bg-[#4cc2ff]"></span>
				</button>
				<button class="ml-[15px]" aria-label="Edge"><svg class="h-[30px] w-[30px]" viewBox="0 0 30 30"><defs><linearGradient id="edge" x1="0" y1="0" x2="1" y2=".5"><stop stop-color="#1ba4e6" /><stop offset="1" stop-color="#5fe37a" /></linearGradient></defs><path d="M0 14A15 15 0 0 1 30 13q0 7-7 7h-5q2-8-5-9-9 0-13 9z" fill="url(#edge)" /><path d="M0 14q2-6 10-6 6 0 8 5-8-2-8 6 1 7 9 7 4 0 8-3-5 7-12 7Q1 29 0 14z" fill="#1476c9" /><path d="M10 12q-5 12 9 16 5-1 8-5-6 3-11 0t-3-9z" fill="#0d3f86" /></svg></button>
				<button class="ml-[25px]" aria-label="Opera"><svg class="h-[30px] w-[30px]" viewBox="0 0 30 30"><circle cx="15" cy="15" r="14.5" fill="#e81224" /><path d="M20 2q9 5 9 13t-9 13q4-3 4-13T20 2z" fill="#ff5a5f" /><ellipse cx="15" cy="15" rx="6" ry="10.5" fill="#3b1b14" /></svg></button>
				<button class="ml-[25px]" aria-label="File Explorer"><svg class="h-[30px] w-[30px]" viewBox="0 0 30 30"><path d="M0 3q0-2 2-2h8l4 4h-4L0 12z" fill="#d9910c" /><path d="M0 8h10l4-3h14q2 0 2 2v19q0 2-2 2H2q-2 0-2-2z" fill="#fdd047" /><path d="M5 28v-5q0-2 2-2h16q2 0 2 2v5z" fill="#1a78c9" /><path d="M9 25h12" stroke="#0b4f92" stroke-width="1.5" /></svg></button>
				<button class="relative ml-[25px] flex h-[50px] items-center" aria-label="WhatsApp"><svg class="h-[30px] w-[30px]" viewBox="0 0 30 30"><path d="M15.500 1.500a13 13 0 1 1-6.500 24.600L1.500 28l2-7A13 13 0 0 1 15.500 1.500z" fill="#3fc351" stroke="#fff" stroke-width="2.5" /><path d="M10 8q2-1 3 2t-1 3q2 4 5 5 1-3 3-1.500 4 1.500 2 3.500-3 3-8-1Q7 13 10 8z" fill="#fff" /></svg><span class="absolute bottom-0 left-[11px] h-1 w-2 rounded-full bg-[#b5a3a0]"></span></button>
			</div>
			<div class="flex items-center justify-end pr-[26px] pb-[2px]">
				<svg class="h-2 w-[15px]" viewBox="0 0 15 8"><path d="M1 7l6.500-6L14 7" fill="none" stroke="#fff" stroke-width="1.7" /></svg>
				<p class="ml-[26px] text-center leading-5">ENG<br />US</p>
				<svg class="ml-[22px] h-5 w-5" viewBox="0 0 20 20" fill="none" stroke="#fff" stroke-width="1.6"><path d="M1 8q9-9 18 0M3.500 11q6.500-6.500 13 0M6 14q4-4 8 0" /><circle cx="10" cy="16" r="1.5" fill="#fff" /></svg>
				<svg class="ml-[10px] h-5 w-5" viewBox="0 0 20 20" fill="none" stroke="#fff" stroke-width="1.4"><path d="M1 8v5h3l5 4V3L4 8zM11.500 8q1.500 2.500 0 5M14 6q3 4.500 0 9M16.500 4q4.500 6.500 0 13" /></svg>
				<svg class="ml-[10px] h-5 w-5" viewBox="0 0 20 20"><rect x="1.5" y="6" width="15.5" height="10" rx="2" fill="none" stroke="#fff" stroke-width="1.7" /><path d="M5 8h10v6H4zM18 9h2v4h-2zM3 1l-3 7h3l-1 4 5-6H4l2-5z" fill="#fff" /></svg>
				<p class="ml-6 text-right leading-5">10:15 AM<br />19/06/2023</p>
				<svg class="ml-[10px] h-5 w-[18px]" viewBox="0 0 18 20"><path d="M1 14V7q1-6 8-6 6 0 7 6v7l1 2H0zM6 17h5q-1 2.500-2.500 2.500T6 17z" fill="#fff" /><path d="M6 6h4l-4 5h4" fill="none" stroke="#132b2e" stroke-width="1.3" /><path d="M13 1h4l-4 5h4" fill="none" stroke="#fff" stroke-width="1.3" /></svg>
			</div>
		</footer>
	</body>
</html>
